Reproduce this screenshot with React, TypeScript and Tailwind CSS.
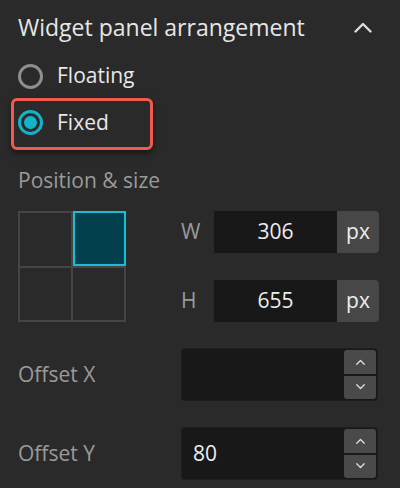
import { useState } from "react";

function Chevron({ up, className }: { up?: boolean; className?: string }) {
  return (
    <svg viewBox="0 0 12 8" className={className} fill="none" stroke="currentColor" strokeWidth="1.6" strokeLinecap="round" strokeLinejoin="round">
      {up ? <path d="M1 7 L6 2 L11 7" /> : <path d="M1 1 L6 6 L11 1" />}
    </svg>
  );
}

function Radio({ checked }: { checked: boolean }) {
  return checked ? (
    <span className="flex h-[25px] w-[25px] items-center justify-center rounded-full border-[3px] border-[#13b3c9]">
      <span className="h-[13px] w-[13px] rounded-full bg-[#13b3c9]" />
    </span>
  ) : (
    <span className="h-[25px] w-[25px] rounded-full border-[3px] border-[#8f8f8f]" />
  );
}

function Stepper({ value }: { value: string }) {
  return (
    <div className="flex h-[53px] w-[197px] items-stretch rounded-[4px] border border-[#1e1e1e] bg-[#181818]">
      <div className="flex flex-1 items-center pl-[11px] text-[21px] text-[#ededed]">{value}</div>
      <div className="flex w-[33px] flex-col gap-[2px] py-[1px] pr-[1px]">
        <button className="flex flex-1 items-center justify-center rounded-t-[3px] bg-[#4a4a4a] text-[#e5e5e5]">
          <Chevron up className="h-[6px] w-[11px]" />
        </button>
        <button className="flex flex-1 items-center justify-center rounded-b-[3px] bg-[#4a4a4a] text-[#e5e5e5]">
          <Chevron className="h-[6px] w-[11px]" />
        </button>
      </div>
    </div>
  );
}

function SizeField({ label, value }: { label: string; value: string }) {
  return (
    <div className="flex items-center">
      <span className="w-[33px] text-[21px] text-[#9a9a9a]">{label}</span>
      <div className="flex h-[42px] w-[123px] items-center justify-center bg-[#181818] text-[21px] text-[#ededed]">{value}</div>
      <div className="flex h-[42px] w-[42px] items-center justify-center rounded-r-[4px] bg-[#474747] text-[21px] text-[#ededed]">px</div>
    </div>
  );
}

export default function App() {
  const [mode, setMode] = useState<"floating" | "fixed">("fixed");

  return (
    <div className="h-[488px] w-[400px] overflow-hidden bg-[#2a2a2a] pl-[18px] font-['Open_Sans','Liberation_Sans',sans-serif] text-[#e8e8e8]">
      <div className="flex h-[54px] items-center justify-between pr-[27px]">
        <h2 className="text-[23px] font-medium text-[#e6e6e6]">Widget panel arrangement</h2>
        <Chevron up className="h-[12px] w-[20px] text-[#dcdcdc]" />
      </div>

      <button onClick={() => setMode("floating")} className="flex h-[44px] items-center gap-[14px] text-[21px]">
        <Radio checked={mode === "floating"} />
        <span>Floating</span>
      </button>

      <button
        onClick={() => setMode("fixed")}
        className="-ml-[7px] flex h-[52px] w-[142px] items-center gap-[14px] rounded-[6px] border-[3px] border-[#f25a4d] pb-[3px] pl-[4px] text-[21px] shadow-[0_3px_6px_rgba(0,0,0,0.5)]"
      >
        <Radio checked={mode === "fixed"} />
        <span>Fixed</span>
      </button>

      <div className="mt-[18px] h-[24px] text-[21px] leading-[24px] text-[#9a9a9a]">Position &amp; size</div>

      <div className="mt-[19px] flex items-start">
        <div className="grid h-[111px] w-[108px] grid-cols-2 grid-rows-2 gap-[2px] bg-[#454545] p-[2px]">
          <div className="bg-[#2a2a2a]" />
          <div className="-m-[2px] ml-0 mb-0 border-2 border-[#16bfd6] bg-[#03404d]" />
          <div className="bg-[#2a2a2a]" />
          <div className="bg-[#2a2a2a]" />
        </div>
        <div className="ml-[55px] flex flex-col gap-[27px]">
          <SizeField label="W" value="306" />
          <SizeField label="H" value="655" />
        </div>
      </div>

      <div className="mt-[26px] flex items-center justify-between pr-[22px]">
        <span className="text-[21px] text-[#9a9a9a]">Offset X</span>
        <Stepper value="" />
      </div>

      <div className="mt-[26px] flex items-center justify-between pr-[22px]">
        <span className="text-[21px] text-[#9a9a9a]">Offset Y</span>
        <Stepper value="80" />
      </div>
    </div>
  );
}
